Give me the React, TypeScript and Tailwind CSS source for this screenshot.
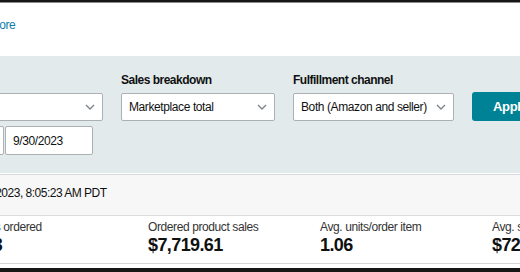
function Chevron() {
    return (
        <svg width="10" height="6" viewBox="0 0 10 6" className="shrink-0">
            <polyline points="1,1 5,5 9,1" fill="none" stroke="#7a838a" strokeWidth="1.3" />
        </svg>
    );
}

function Select({ value, width }: { value: string; width: string }) {
    return (
        <div className={`${width} h-[28px] bg-white border border-[#aab0b3] rounded-[2px] flex items-center justify-between pl-[7px] pr-[7px]`}>
            <span className="text-[12px] tracking-[-0.4px] text-[#0f1111] whitespace-nowrap">{value}</span>
            <Chevron />
        </div>
    );
}

const metrics = [
    { label: 'Units ordered', value: '113', width: 'w-[173px]' },
    { label: 'Ordered product sales', value: '$7,719.61', width: 'w-[172px]' },
    { label: 'Avg. units/order item', value: '1.06', width: 'w-[172px]' },
    { label: 'Avg. sales/order item', value: '$72.82', width: 'w-[172px]' },
];

export default function App() {
    return (
        <div className="w-[520px] h-[272px] overflow-hidden bg-white font-['Liberation_Sans',Arial,sans-serif] text-[#0f1111]">
            <div className="h-[3px] bg-[#161616] border-b border-[#8a8a8a]" />

            <div className="h-[53px] pt-[14px]">
                <p className="ml-[-42px] text-[12px] leading-[16px] tracking-[-0.4px] text-[#0e7ea8] whitespace-nowrap">Learn more</p>
            </div>

            {/* filters */}
            <div className="h-[118px] bg-[#e3eaeb] border-b border-white pt-[17px]">
                <div className="flex items-start gap-[18px] ml-[-97px]">
                    <div className="w-[200px] shrink-0">
                        <p className="text-[12px] leading-[15px] font-bold tracking-[-0.5px] mb-[5px]">Date</p>
                        <Select value="Custom" width="w-[200px]" />
                        <div className="flex gap-[1px] mt-[5px]">
                            <div className="w-[101px] h-[29px] bg-white border border-[#aab0b3] rounded-[2px] flex items-center pl-[8px] text-[12px] tracking-[-0.4px]">9/1/2023</div>
                            <div className="w-[88px] h-[29px] bg-white border border-[#aab0b3] rounded-[2px] flex items-center pl-[7px] text-[12px] tracking-[-0.4px]">9/30/2023</div>
                        </div>
                    </div>
                    <div className="w-[154px] shrink-0">
                        <p className="text-[12px] leading-[15px] font-bold tracking-[-0.5px] mb-[5px] whitespace-nowrap">Sales breakdown</p>
                        <Select value="Marketplace total" width="w-[154px]" />
                    </div>
                    <div className="w-[161px] shrink-0">
                        <p className="text-[12px] leading-[15px] font-bold tracking-[-0.5px] mb-[5px] whitespace-nowrap">Fulfillment channel</p>
                        <Select value="Both (Amazon and seller)" width="w-[161px]" />
                    </div>
                    <button className="mt-[19px] w-[80px] h-[29px] shrink-0 bg-[#008296] rounded-[3px] text-white text-[13px] font-bold tracking-[-0.3px] text-left pl-[21px]">
                        Apply
                    </button>
                </div>
            </div>

            {/* snapshot time */}
            <div className="h-[42px] bg-[#f7f7f7] border-t border-[#d5d9d9] border-b border-b-[#dcdcdc] pt-[10px]">
                <p className="ml-[-29px] text-[12px] leading-[16px] tracking-[-0.5px] whitespace-nowrap">9/30/2023, 8:05:23 AM PDT</p>
            </div>

            {/* metrics */}
            <div className="h-[48px] border-b border-[#d5d5d5] pt-[4px]">
                <div className="flex ml-[-25px]">
                    {metrics.map((m) => (
                        <div key={m.label} className={`${m.width} shrink-0`}>
                            <p className="text-[12px] leading-[15px] tracking-[-0.4px] text-[#333] whitespace-nowrap">{m.label}</p>
                            <p className="text-[18px] leading-[20px] font-bold tracking-[-0.6px] text-[#0f1111] whitespace-nowrap">{m.value}</p>
                        </div>
                    ))}
                </div>
            </div>

            <div className="h-[4px] bg-white" />
            <div className="h-[4px] bg-[#161616]" />
        </div>
    );
}
